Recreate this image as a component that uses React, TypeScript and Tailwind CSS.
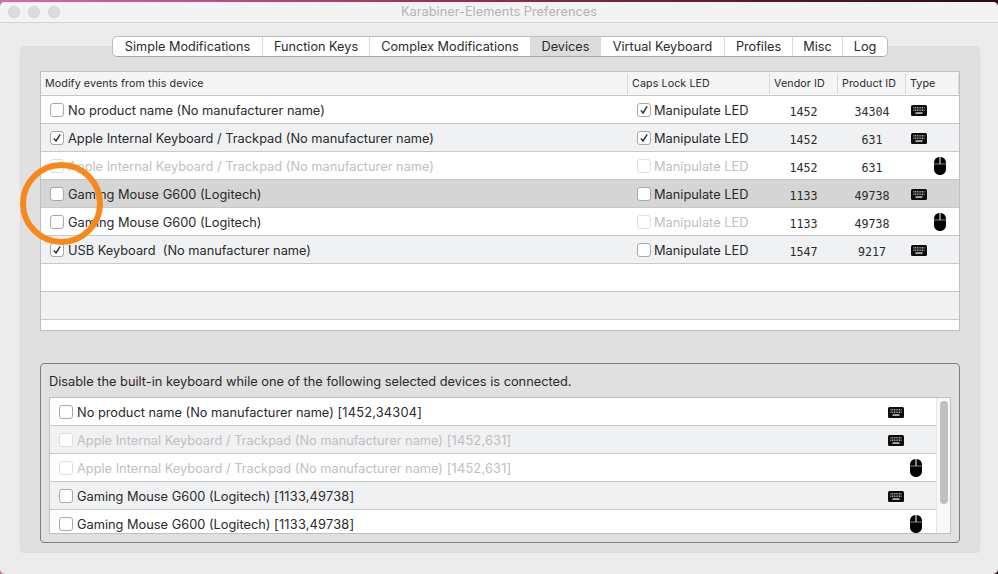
const sans = "font-['Inter','Liberation_Sans',sans-serif]";

function Check({ checked, disabled }: { checked?: boolean; disabled?: boolean }) {
  return (
    <span
      className={`flex h-[14px] w-[14px] shrink-0 items-center justify-center rounded-[3px] border bg-white ${
        disabled ? "border-[#dedede]" : "border-[#a9a9a9]"
      }`}
    >
      {checked && (
        <svg width="10" height="10" viewBox="0 0 10 10" fill="none">
          <path d="M1.8 5.4 L4 8 L8.2 1.4" stroke={disabled ? "#c4c4c4" : "#2b2b2b"} strokeWidth="1.4" />
        </svg>
      )}
    </span>
  );
}

function Keyboard({ className }: { className?: string }) {
  return (
    <svg width="16" height="11" viewBox="0 0 16 11" className={className}>
      <rect width="16" height="11" rx="1.5" fill="#0c0c0c" />
      <path d="M2.5 2.5h11M2.5 4h11M2.5 5.5h11" stroke="#d8d8d8" strokeWidth="0.8" strokeDasharray="1 0.7" />
      <rect x="4.5" y="7.3" width="7" height="1.5" fill="#d0d0d0" />
    </svg>
  );
}

function Mouse({ className }: { className?: string }) {
  return (
    <svg width="12" height="18" viewBox="0 0 12 18" className={className}>
      <path d="M0 6.7 V5.5 C0 2.5 2 .4 5.5 0 V6.7 Z M6.5 0 C10 .4 12 2.5 12 5.5 V6.7 H6.5 Z" fill="#050505" />
      <path d="M0 7.3 H12 V12 C12 15.5 9.5 18 6 18 C2.5 18 0 15.5 0 12 Z" fill="#050505" />
    </svg>
  );
}

const mono = "font-['DejaVu_Sans_Mono','Liberation_Mono',monospace] text-[11.7px] text-[#2c2c2c]";

type Dev = {
  name: string;
  on?: boolean;
  dis?: boolean;
  led?: boolean;
  ledDis?: boolean;
  v: string;
  p: string;
  mouse?: boolean;
  bg: string;
};

const devices: Dev[] = [
  { name: "No product name (No manufacturer name)", led: true, v: "1452", p: "34304", bg: "bg-white" },
  { name: "Apple Internal Keyboard / Trackpad (No manufacturer name)", on: true, led: true, v: "1452", p: "631", bg: "bg-[#f0f1f3]" },
  { name: "Apple Internal Keyboard / Trackpad (No manufacturer name)", dis: true, ledDis: true, v: "1452", p: "631", mouse: true, bg: "bg-white" },
  { name: "Gaming Mouse G600 (Logitech)", v: "1133", p: "49738", bg: "bg-[#d5d5d5]" },
  { name: "Gaming Mouse G600 (Logitech)", ledDis: true, v: "1133", p: "49738", mouse: true, bg: "bg-white" },
  { name: "USB Keyboard  (No manufacturer name)", on: true, v: "1547", p: "9217", bg: "bg-[#f0f1f3]" },
];

const builtIn = [
  { name: "No product name (No manufacturer name)", id: "[1452,34304]", bg: "bg-white" },
  { name: "Apple Internal Keyboard / Trackpad (No manufacturer name)", id: "[1452,631]", dis: true, bg: "bg-[#f0f1f3]" },
  { name: "Apple Internal Keyboard / Trackpad (No manufacturer name)", id: "[1452,631]", dis: true, mouse: true, bg: "bg-white" },
  { name: "Gaming Mouse G600 (Logitech)", id: "[1133,49738]", bg: "bg-[#f0f1f3]" },
  { name: "Gaming Mouse G600 (Logitech)", id: "[1133,49738]", mouse: true, bg: "bg-white" },
];

const tabs = [
  { t: "Simple Modifications", w: "w-[149px]" },
  { t: "Function Keys", w: "w-[107px]" },
  { t: "Complex Modifications", w: "w-[161px]" },
  { t: "Devices", w: "w-[70px]", active: true },
  { t: "Virtual Keyboard", w: "w-[124px]" },
  { t: "Profiles", w: "w-[68px]" },
  { t: "Misc", w: "w-[50px]" },
  { t: "Log", w: "w-[45px]" },
];

const heads = [
  { t: "Modify events from this device", w: "w-[587px]" },
  { t: "Caps Lock LED", w: "w-[142px]" },
  { t: "Vendor ID", w: "w-[68px]" },
  { t: "Product ID", w: "w-[68px]" },
  { t: "Type", w: "w-[53px]" },
];

export default function App() {
  return (
    <div className={`h-[574px] w-[998px] overflow-hidden bg-gradient-to-r from-[#d070a8] via-[#8a2c55] to-[#2a0c12] pt-[2px] ${sans}`}>
      <div className="flex h-[572px] flex-col overflow-hidden rounded-[5px] bg-[#ececec] text-[12.8px] text-[#2a2a2a]">
        <div className="relative flex h-[21px] shrink-0 items-center justify-center border-b border-[#d2d2d2] bg-[#f3f3f3]">
          <div className="absolute left-[8px] top-[4px] flex gap-[8px]">
            <span className="h-[12px] w-[12px] rounded-full border border-[#d2d2d2] bg-[#dcdcdc]" />
            <span className="h-[12px] w-[12px] rounded-full border border-[#d2d2d2] bg-[#dcdcdc]" />
            <span className="h-[12px] w-[12px] rounded-full border border-[#d2d2d2] bg-[#dcdcdc]" />
          </div>
          <span className="text-[#b4b4b4]">Karabiner-Elements Preferences</span>
        </div>

        <div className="ml-[20px] mt-[23px] h-[507px] w-[960px] rounded-[4px] border border-[#dcdcdc] bg-[#e0e0e0] px-[19px]">
          <div className="-mt-[11px] ml-[72px] flex h-[21px] w-[776px] overflow-hidden rounded-[5px] border border-[#bdbdbd] border-b-[#a8a8a8] bg-white text-[12.7px]">
            {tabs.map((t, i) => (
              <div
                key={t.t}
                className={`flex shrink-0 items-center justify-center ${t.w} ${i ? "border-l border-[#dadada]" : ""} ${
                  t.active ? "bg-[#dcdcdc]" : ""
                }`}
              >
                {t.t}
              </div>
            ))}
          </div>

          <div className="mt-[14px] h-[260px] overflow-hidden border border-[#bfbfbf] bg-white">
            <div className="flex h-[24px] items-center border-b border-[#c4c4c4] bg-[#f5f5f5] text-[10.7px] tracking-[0.1px]">
              {heads.map((h) => (
                <div key={h.t} className={`flex h-[20px] shrink-0 items-center border-r border-[#dadada] pl-[4px] pt-[2px] ${h.w}`}>
                  {h.t}
                </div>
              ))}
            </div>
            {devices.map((d, i) => (
              <div key={i} className={`flex h-[28px] items-center border-b border-[#c8c8c8] pt-[1px] ${d.bg}`}>
                <div className={`flex w-[587px] shrink-0 items-center gap-[4px] pl-[9px] ${d.dis ? "text-[#c0c0c0]" : ""}`}>
                  <Check checked={d.on} disabled={d.dis} />
                  <span className="mt-[2px] whitespace-pre">{d.name}</span>
                </div>
                <div className={`flex w-[142px] shrink-0 items-center gap-[3px] pl-[9px] ${d.ledDis ? "text-[#c0c0c0]" : ""}`}>
                  <Check checked={d.led} disabled={d.ledDis} />
                  <span className="mt-[2px]">Manipulate LED</span>
                </div>
                <div className={`mt-[6px] w-[68px] shrink-0 pr-[1px] text-center ${mono}`}>{d.v}</div>
                <div className={`mt-[6px] w-[68px] shrink-0 text-center ${mono}`}>{d.p}</div>
                {d.mouse ? <Mouse className="ml-[28px]" /> : <Keyboard className="ml-[5px]" />}
              </div>
            ))}
            <div className="h-[28px] border-b border-[#c8c8c8] bg-white" />
            <div className="h-[28px] border-b border-[#c8c8c8] bg-[#f0f1f3]" />
          </div>

          <div className="mt-[32px] h-[180px] rounded-[4px] border border-[#7f7f7f] px-[8px] pt-[8px]">
            <div className="h-[25px]">Disable the built-in keyboard while one of the following selected devices is connected.</div>
            <div className="flex h-[137px] overflow-hidden border border-[#c0c0c0] bg-white">
              <div className="w-[886px] shrink-0">
                {builtIn.map((b, i) => (
                  <div key={i} className={`flex h-[28px] items-center border-b border-[#c8c8c8] pl-[9px] pt-[1px] ${b.bg} ${b.dis ? "text-[#c0c0c0]" : ""}`}>
                    <Check disabled={b.dis} />
                    <span className="ml-[4px] mt-[2px] w-[811px] shrink-0">
                      {b.name} <span className="tracking-[0.2px]">{b.id}</span>
                    </span>
                    {b.mouse ? <Mouse className="ml-[22px]" /> : <Keyboard />}
                  </div>
                ))}
              </div>
              <div className="flex-1 border-l border-[#e6e6e6] bg-[#f8f8f8] px-[3px] pt-[3px]">
                <div className="h-[103px] w-[8px] rounded-full bg-[#c0c0c0]" />
              </div>
            </div>
          </div>
        </div>
      </div>
      <div className="absolute left-[20px] top-[162px] h-[83px] w-[83px] rounded-full border-[6px] border-[#f5891e]" />
    </div>
  );
}
